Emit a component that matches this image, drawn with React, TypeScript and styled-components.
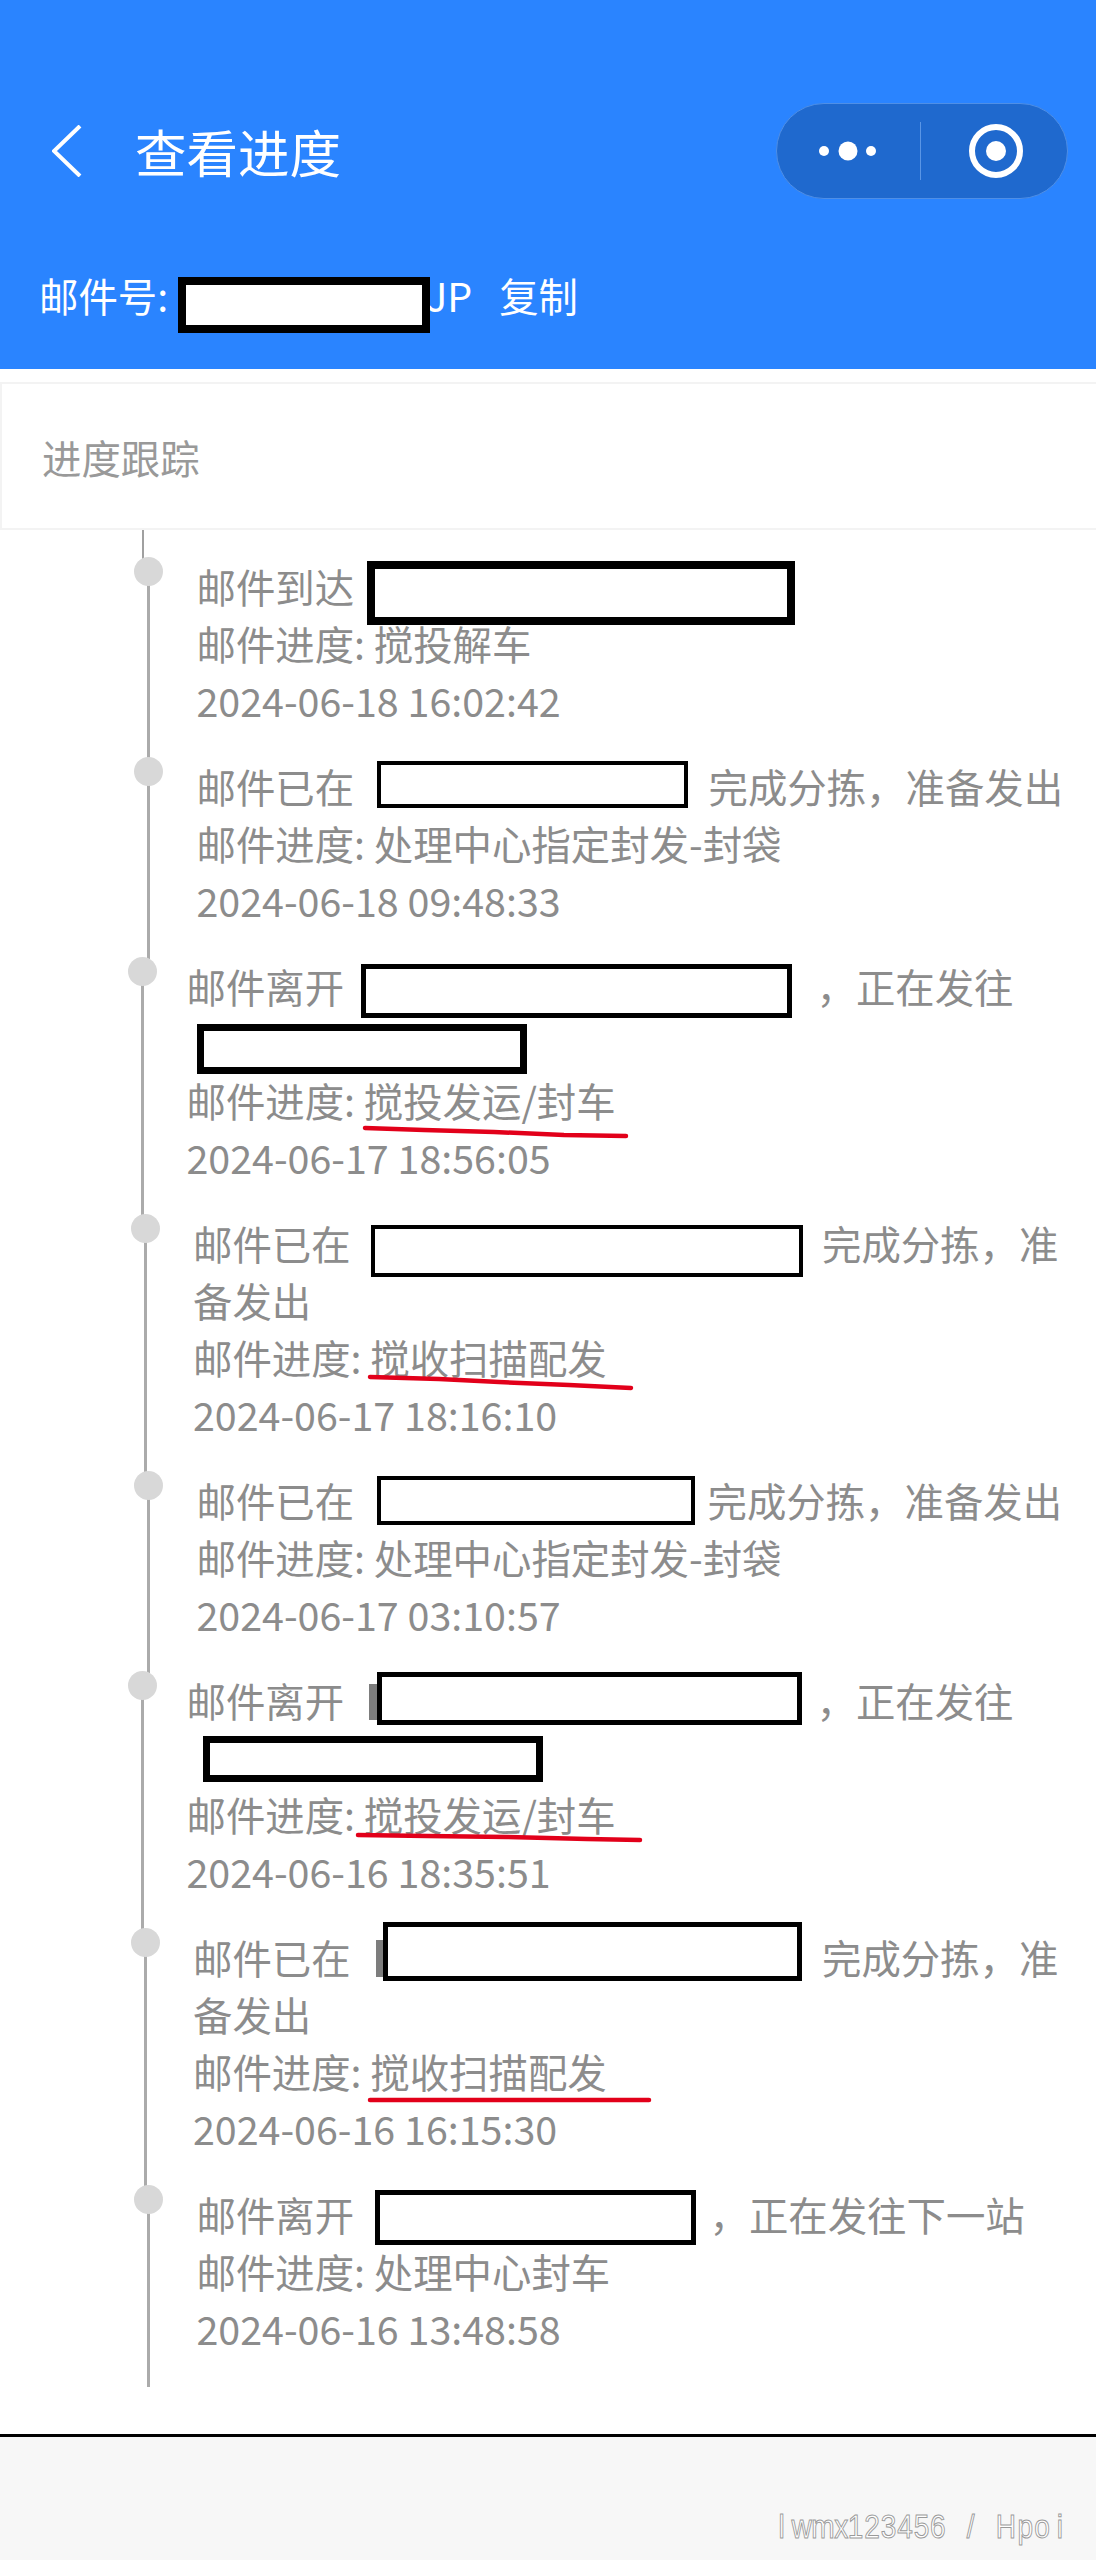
import React from 'react';
import styled, { createGlobalStyle } from 'styled-components';

const Global = createGlobalStyle`
  html, body { margin: 0; padding: 0; background: #fff; }
  body { font-family: "Noto Sans CJK SC", "Noto Sans", sans-serif; }
  * { box-sizing: border-box; }
`;

const Page = styled.div`
  width: 1096px;
  height: 2560px;
  overflow: hidden;
  display: flex;
  flex-direction: column;
  background: #fff;
`;

const Header = styled.header`
  height: 369px;
  padding-top: 103px;
  background: #2a84ff;
  color: #fff;
`;

const NavBar = styled.div`
  height: 96px;
  padding: 0 28px 0 52px;
  display: flex;
  align-items: center;
`;

const BackIcon = styled.svg`
  width: 30px;
  height: 52px;
  flex: none;
`;

const Title = styled.h1`
  margin: 0 0 0 53px;
  font-size: 51.5px;
  font-weight: 400;
  line-height: 60px;
  flex: 1;
`;

const Capsule = styled.div`
  width: 292px;
  height: 96px;
  border-radius: 48px;
  background: #1f69ce;
  border: 1px solid #4f8fe6;
  display: flex;
  align-items: center;
`;

const CapsuleCell = styled.div`
  flex: 1;
  height: 58px;
  display: flex;
  align-items: center;
  justify-content: center;
  & + & {
    border-left: 1px solid #5a96e6;
    padding-left: 4px;
  }
`;

const Waybill = styled.div`
  margin-top: 70px;
  height: 57px;
  padding-left: 39px;
  display: flex;
  align-items: center;
  font-size: 39.4px;
  white-space: pre;
`;

const WaybillText = styled.span`
  margin-top: -6px;
`;

const CopyLink = styled(WaybillText)`
  margin-left: 27px;
`;

const SectionCard = styled.section`
  margin-top: 13px;
  height: 148px;
  padding-left: 40px;
  display: flex;
  align-items: center;
  border: solid #f3f3f3;
  border-width: 2px 0 2px 2px;
  color: #999;
  font-size: 39.4px;
`;

const Timeline = styled.div`
  flex: 1;
`;

const TopStub = styled.div`
  height: 29px;
  margin-left: 142px;
  border-left: 2px solid #a0a0a0;
`;

const Item = styled.div<{ $line: number; $text: number }>`
  position: relative;
  margin-left: ${p => p.$line - 1}px;
  padding: 0 0 29px ${p => p.$text - p.$line - 3.5}px;
  border-left: 3px solid #ababab;
  color: #8c8c8c;
  font-size: 39.4px;
`;

const Dot = styled.span`
  position: absolute;
  left: -16px;
  top: -2px;
  width: 29px;
  height: 29px;
  border-radius: 50%;
  background: #d8d8d8;
`;

const Row = styled.div`
  position: relative;
  height: 57px;
  display: flex;
  align-items: center;
  white-space: pre;
`;

const RowText = styled.span`
  margin-top: -5px;
`;

const Redaction = styled.span<{ $w: number; $h: number; $b: number; $ml: number; $mr: number; $dy: number }>`
  flex: none;
  position: relative;
  z-index: 1;
  width: ${p => p.$w}px;
  height: ${p => p.$h}px;
  margin-left: ${p => p.$ml}px;
  margin-right: ${p => p.$mr}px;
  margin-top: ${p => p.$dy * 2}px;
  border: ${p => p.$b}px solid #000;
  background: #fff;
`;

const Sliver = styled.span<{ $w: number; $h: number; $ml: number }>`
  flex: none;
  width: ${p => p.$w}px;
  height: ${p => p.$h}px;
  margin-left: ${p => p.$ml}px;
  background: #7d7d7d;
`;

const Scribble = styled.svg<{ $left: number; $top: number }>`
  position: absolute;
  z-index: 2;
  left: ${p => p.$left}px;
  top: ${p => p.$top}px;
  overflow: visible;
`;

const Footer = styled.footer`
  height: 126px;
  border-top: 3px solid #000;
  background: #f7f7f7;
  padding: 75px 32px 0 0;
  display: flex;
  justify-content: flex-end;
`;

const Watermark = styled.span`
  font-family: "Liberation Sans", sans-serif;
  font-size: 33px;
  line-height: 30px;
  height: 30px;
  letter-spacing: 1.5px;
  word-spacing: 13px;
  color: #fff;
  -webkit-text-stroke: 1px #9a9a9a;
  white-space: pre;
  transform: scaleX(0.85);
  transform-origin: right center;
`;

const WatermarkWide = styled.span`
  letter-spacing: 8px;
`;

const WatermarkTight = styled.span`
  letter-spacing: -0.5px;
`;

const WatermarkDigits = styled.span`
  letter-spacing: 1px;
`;

type Seg =
  | string
  | { w: number; h: number; b: number; ml: number; mr?: number; dy: number }
  | { sw: number; sh: number; sml: number };

type Mark = { left: number; top: number; w: number; h: number; d: string };

type Entry = { line: number; text: number; rows: Seg[][]; mark?: Mark };

const entries: Entry[] = [
  {
    line: 148,
    text: 198,
    rows: [
      ['邮件到达', { w: 428, h: 64, b: 8, ml: 13, dy: 5 }],
      ['邮件进度: 搅投解车'],
      ['2024-06-18 16:02:42'],
    ],
  },
  {
    line: 148,
    text: 198,
    rows: [
      ['邮件已在', { w: 311, h: 47, b: 4, ml: 23, mr: 20.5, dy: -3.5 }, '完成分拣，准备发出'],
      ['邮件进度: 处理中心指定封发-封袋'],
      ['2024-06-18 09:48:33'],
    ],
  },
  {
    line: 142,
    text: 188,
    rows: [
      ['邮件离开', { w: 431, h: 54, b: 5, ml: 17, mr: 24.5, dy: 3 }, '，正在发往'],
      [{ w: 330, h: 50, b: 7, ml: 10.5, dy: 4.5 }],
      ['邮件进度: 搅投发运/封车'],
      ['2024-06-17 18:56:05'],
    ],
    mark: { left: 177.5, top: 54, w: 263, h: 10, d: 'M1 1 L60 3 L130 5 L200 8 L262 9' },
  },
  {
    line: 145,
    text: 194.5,
    rows: [
      ['邮件已在', { w: 432, h: 52, b: 4, ml: 20.5, mr: 19, dy: 6 }, '完成分拣，准'],
      ['备发出'],
      ['邮件进度: 搅收扫描配发'],
      ['2024-06-17 18:16:10'],
    ],
    mark: { left: 176, top: 45, w: 263, h: 14, d: 'M1 2 L70 4 L130 7 L200 10 L262 13' },
  },
  {
    line: 148,
    text: 198,
    rows: [
      ['邮件已在', { w: 318, h: 49, b: 4, ml: 23, mr: 12.5, dy: -1.5 }, '完成分拣，准备发出'],
      ['邮件进度: 处理中心指定封发-封袋'],
      ['2024-06-17 03:10:57'],
    ],
  },
  {
    line: 142,
    text: 188,
    rows: [
      ['邮件离开', { sw: 8, sh: 36, sml: 25 }, { w: 425, h: 53, b: 5, ml: 0, mr: 14.5, dy: -3.5 }, '，正在发往'],
      [{ w: 340, h: 46, b: 7, ml: 16.5, dy: 0 }],
      ['邮件进度: 搅投发运/封车'],
      ['2024-06-16 18:35:51'],
    ],
    mark: { left: 170.5, top: 47, w: 284, h: 7, d: 'M1 1 L70 2 L150 3 L230 5 L283 6' },
  },
  {
    line: 145,
    text: 194.5,
    rows: [
      ['邮件已在', { sw: 7, sh: 37, sml: 25.5 }, { w: 419, h: 59, b: 5, ml: 0, mr: 20, dy: -7 }, '完成分拣，准'],
      ['备发出'],
      ['邮件进度: 搅收扫描配发'],
      ['2024-06-16 16:15:30'],
    ],
    mark: { left: 176, top: 54, w: 281, h: 4, d: 'M1 2 L280 2' },
  },
  {
    line: 148,
    text: 198,
    rows: [
      ['邮件离开', { w: 321, h: 55, b: 5, ml: 21, mr: 13.5, dy: 1.5 }, '，正在发往下一站'],
      ['邮件进度: 处理中心封车'],
      ['2024-06-16 13:48:58'],
    ],
  },
];

const renderSeg = (seg: Seg, i: number) => {
  if (typeof seg === 'string') return <RowText key={i}>{seg}</RowText>;
  if ('sw' in seg) return <Sliver key={i} $w={seg.sw} $h={seg.sh} $ml={seg.sml} />;
  return <Redaction key={i} $w={seg.w} $h={seg.h} $b={seg.b} $ml={seg.ml} $mr={seg.mr ?? 0} $dy={seg.dy} />;
};

export default function App() {
  return (
    <Page>
      <Global />
      <Header>
        <NavBar>
          <BackIcon viewBox="0 0 30 52">
            <polyline points="28,1 2,26 28,51" fill="none" stroke="#fff" strokeWidth="4" />
          </BackIcon>
          <Title>查看进度</Title>
          <Capsule>
            <CapsuleCell>
              <svg width="64" height="24" viewBox="0 0 64 24">
                <circle cx="8" cy="12" r="5" fill="#fff" />
                <circle cx="32" cy="12" r="9.5" fill="#fff" />
                <circle cx="55" cy="12" r="5" fill="#fff" />
              </svg>
            </CapsuleCell>
            <CapsuleCell>
              <svg width="56" height="56" viewBox="0 0 56 56">
                <circle cx="28" cy="28" r="24" fill="none" stroke="#fff" strokeWidth="6" />
                <circle cx="28" cy="28" r="10" fill="#fff" />
              </svg>
            </CapsuleCell>
          </Capsule>
        </NavBar>
        <Waybill>
          <WaybillText>邮件号:</WaybillText>
          <Redaction $w={252} $h={56} $b={8} $ml={10} $mr={-4} $dy={7} />
          <WaybillText>JP</WaybillText>
          <CopyLink>复制</CopyLink>
        </Waybill>
      </Header>
      <SectionCard>进度跟踪</SectionCard>
      <Timeline>
        <TopStub />
        {entries.map((entry, i) => (
          <Item key={i} $line={entry.line} $text={entry.text}>
            <Dot />
            {entry.rows.map((row, r) => (
              <Row key={r}>
                {row.map(renderSeg)}
                {entry.mark && r === entry.rows.length - 2 && (
                  <Scribble
                    $left={entry.mark.left}
                    $top={entry.mark.top}
                    width={entry.mark.w}
                    height={entry.mark.h}
                  >
                    <path d={entry.mark.d} fill="none" stroke="#e2001a" strokeWidth="4.5" strokeLinecap="round" />
                  </Scribble>
                )}
              </Row>
            ))}
          </Item>
        ))}
      </Timeline>
      <Footer>
        <Watermark>
          <WatermarkWide>l</WatermarkWide>
          <WatermarkTight>wmx</WatermarkTight>
          <WatermarkDigits>123456</WatermarkDigits> / Hp<WatermarkWide>o</WatermarkWide>i
        </Watermark>
      </Footer>
    </Page>
  );
}
